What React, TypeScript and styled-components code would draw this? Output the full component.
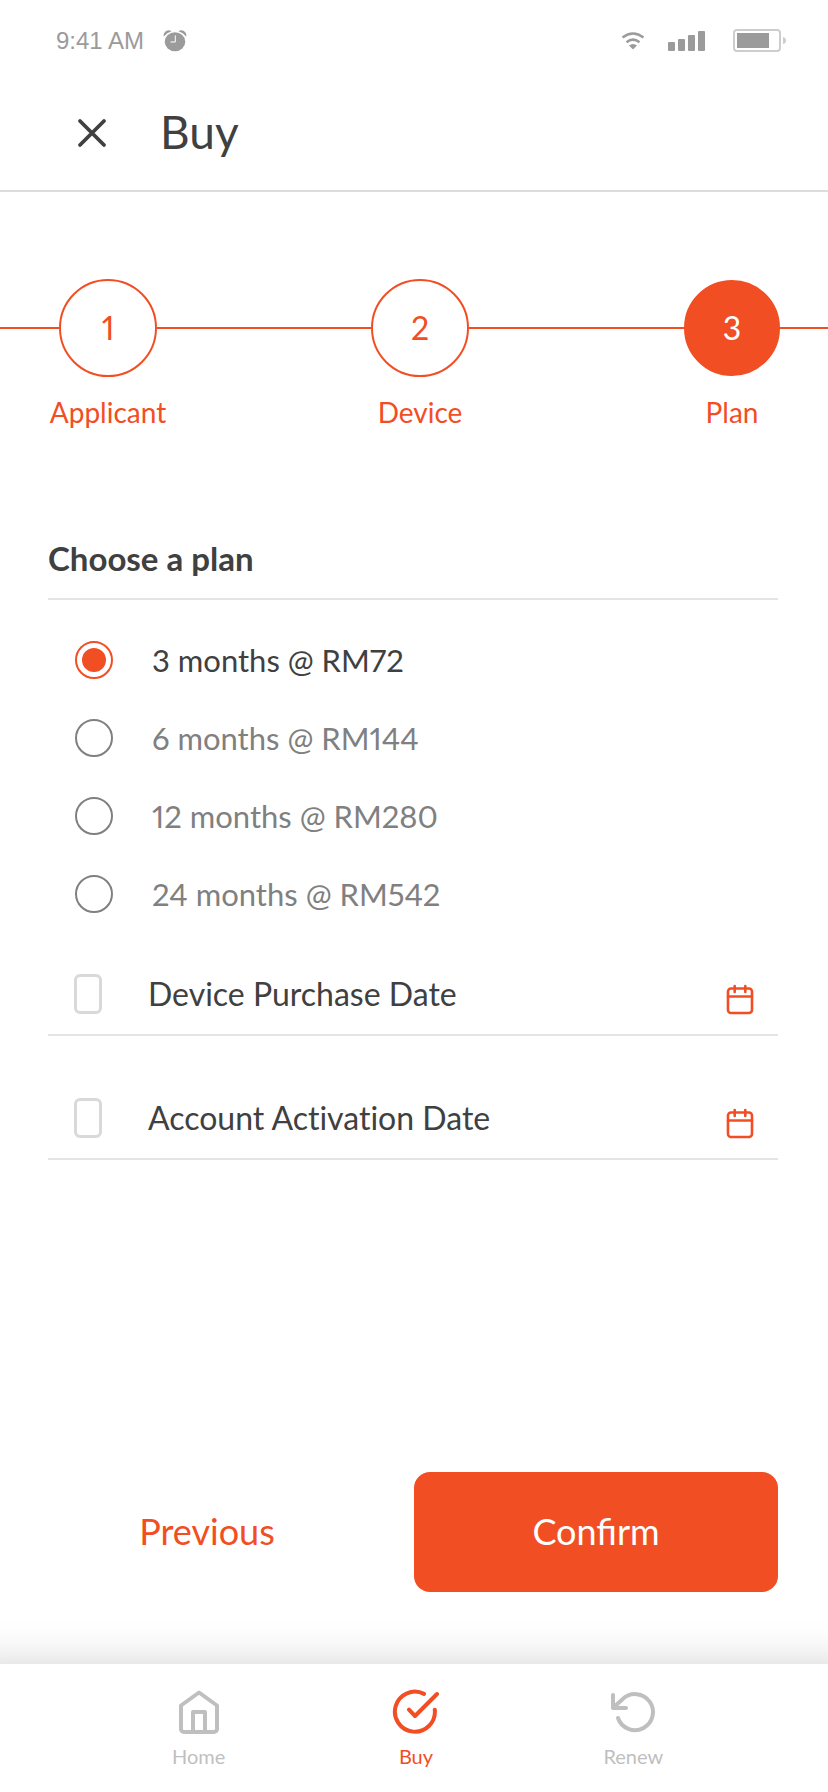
import React, { useState } from "react";
import styled, { createGlobalStyle } from "styled-components";

const accent = "#f24e24";
const ink = "#404040";
const muted = "#808080";
const idle = "#bfbfbf";
const rule = "#e4e4e4";
const statusGray = "#9b9b9b";

const GlobalStyle = createGlobalStyle`
  *, *::before, *::after { box-sizing: border-box; }
  body {
    margin: 0;
    background: #fff;
    color: ${ink};
    font-family: Lato, "Open Sans", sans-serif;
    font-variant-numeric: proportional-nums;
  }
  button, input { font: inherit; color: inherit; }
  button { border: 0; padding: 0; background: none; cursor: pointer; }
`;

const Page = styled.div`
  display: flex;
  flex-direction: column;
  min-height: 100vh;
`;

const StatusBar = styled.div`
  display: flex;
  align-items: center;
  justify-content: space-between;
  height: 82px;
  padding: 0 42px 0 56px;
  color: ${statusGray};
  font: 24px/28px "Liberation Sans", sans-serif;
`;

const StatusGroup = styled.div<{ $gap: number }>`
  display: flex;
  align-items: center;
  gap: ${(p) => p.$gap}px;
`;

const Header = styled.header`
  display: flex;
  align-items: center;
  gap: 51px;
  height: 110px;
  padding: 0 48px 8px 77px;
  border-bottom: 2px solid #dcdcdc;
`;

const CloseButton = styled.button`
  display: flex;
`;

const Title = styled.h1`
  margin: 0;
  font-size: 46px;
  font-weight: 400;
  line-height: 60px;
`;

const Steps = styled.ol`
  display: flex;
  justify-content: space-between;
  margin: 0;
  padding: 87px 36px 0 48px;
  list-style: none;
  background: linear-gradient(${accent}, ${accent}) 0 135px / 100% 2px no-repeat;
`;

const Step = styled.li`
  display: flex;
  flex-direction: column;
  align-items: center;
  gap: 17px;
  width: 120px;
  color: ${accent};
  font-size: 28px;
  line-height: 36px;
`;

const StepNumber = styled.span<{ $active: boolean }>`
  display: flex;
  align-items: center;
  justify-content: center;
  width: ${(p) => (p.$active ? 96 : 98)}px;
  height: ${(p) => (p.$active ? 96 : 98)}px;
  margin: ${(p) => (p.$active ? 1 : 0)}px;
  border: 2px solid ${accent};
  border-radius: 50%;
  background: ${(p) => (p.$active ? accent : "#fff")};
  color: ${(p) => (p.$active ? "#fff" : accent)};
  font-size: 32px;
`;

const Form = styled.form`
  display: flex;
  flex: 1;
  flex-direction: column;
`;

const Fields = styled.div`
  flex: 1;
  padding: 108px 50px 0 48px;
`;

const PlanGroup = styled.fieldset`
  display: block;
  min-width: 0;
  margin: 0;
  padding: 0;
  border: 0;
`;

const Legend = styled.legend`
  width: 100%;
  margin-bottom: 21px;
  padding: 0 0 20px;
  border-bottom: 2px solid ${rule};
  font-size: 33px;
  font-weight: 700;
  line-height: 40px;
`;

const PlanOption = styled.label<{ $active: boolean }>`
  display: flex;
  align-items: center;
  gap: 39px;
  height: 78px;
  padding-left: 27px;
  color: ${(p) => (p.$active ? ink : muted)};
  font-size: 31px;
  line-height: 40px;
`;

const Radio = styled.input`
  appearance: none;
  width: 38px;
  height: 38px;
  margin: 0;
  padding: 5px;
  border: 2px solid ${muted};
  border-radius: 50%;
  background-clip: content-box;

  &:checked {
    border-color: ${accent};
    background-color: ${accent};
  }
`;

const DateRow = styled.div`
  display: flex;
  align-items: center;
  justify-content: space-between;
  height: 82px;
  margin-top: 21px;
  padding: 0 24px 0 26px;
  border-bottom: 2px solid ${rule};

  & + & {
    margin-top: 42px;
  }
`;

const DateLabel = styled.label`
  display: flex;
  align-items: center;
  gap: 46px;
  font-size: 32px;
  font-variant-ligatures: no-common-ligatures;
  line-height: 40px;
`;

const Checkbox = styled.input`
  appearance: none;
  width: 28px;
  height: 40px;
  margin: 0;
  border: 3px solid #d9d9d9;
  border-radius: 6px;

  &:checked {
    border-color: ${accent};
  }
`;

const CalendarButton = styled.button`
  display: flex;
  padding-top: 12px;
  color: ${accent};
`;

const Actions = styled.div`
  display: grid;
  grid-template-columns: 1fr 1fr;
  padding-bottom: 72px;
`;

const ActionButton = styled.button<{ $primary?: boolean }>`
  height: 120px;
  margin-right: ${(p) => (p.$primary ? 50 : 0)}px;
  padding-bottom: 2px;
  border-radius: 16px;
  background: ${(p) => (p.$primary ? accent : "transparent")};
  color: ${(p) => (p.$primary ? "#fff" : accent)};
  font-size: 36px;
  line-height: 44px;
`;

const TabBar = styled.nav`
  display: grid;
  grid-template-columns: repeat(3, 1fr);
  height: 128px;
  padding: 24px 86px 0 90px;
  background: #fff;
  box-shadow: 0 40px 40px 40px rgba(0, 0, 0, 0.18);
`;

const Tab = styled.a<{ $active?: boolean }>`
  display: flex;
  flex-direction: column;
  align-items: center;
  gap: 7px;
  color: ${(p) => (p.$active ? accent : idle)};
  font-size: 20px;
  line-height: 26px;
  text-decoration: none;
`;

const LineIcon = styled.svg`
  display: block;
  fill: none;
  stroke: currentColor;
  stroke-linecap: round;
  stroke-linejoin: round;
`;

const AlarmIcon = () => (
  <svg width="24" height="22" viewBox="0 0 24 22" fill={statusGray} aria-hidden="true">
    <path d="M0.800 6.500A5 5 0 0 1 8.500 1.200Q4 2.500 0.800 6.500ZM23.200 6.500A5 5 0 0 0 15.500 1.200Q20 2.500 23.200 6.500Z" />
    <ellipse cx="12" cy="11.700" rx="10.300" ry="9.500" />
    <path d="M12.300 5.500V12H7.500" fill="none" stroke="#fff" strokeWidth="1" />
  </svg>
);

const WifiIcon = () => (
  <LineIcon width="24" height="20" viewBox="0 0 24 20" strokeWidth="2.500" aria-hidden="true">
    <path d="M1.500 6.500Q12-1.500 22.500 6.500M5.500 11.200Q12 6 18.500 11.200" strokeLinecap="butt" />
    <path d="M8 14.600Q12 11.400 16 14.600L12 18.500Z" fill="currentColor" stroke="none" />
  </LineIcon>
);

const SignalIcon = () => (
  <svg width="41" height="22" viewBox="0 0 41 22" fill={statusGray} aria-hidden="true">
    <rect x="0" y="12" width="7" height="9" rx="1" />
    <rect x="10" y="9" width="7" height="12" rx="1" />
    <rect x="20" y="5" width="7" height="16" rx="1" />
    <rect x="30" y="1" width="7" height="20" rx="1" />
  </svg>
);

const BatteryIcon = () => (
  <svg width="54" height="24" viewBox="0 0 54 24" aria-hidden="true">
    <rect x="2" y="1" width="46" height="21" rx="3" fill="none" stroke="#cdcdcd" strokeWidth="2" />
    <rect x="5" y="4" width="32" height="15" fill={statusGray} />
    <path d="M51 8Q54 8.500 54 11.500T51 15Z" fill="#cdcdcd" />
  </svg>
);

const CloseIcon = () => (
  <LineIcon width="32" height="32" viewBox="0 0 32 32" strokeWidth="3.800" aria-hidden="true">
    <path d="M3 5L27 29M27 5L3 29" />
  </LineIcon>
);

const CalendarIcon = () => (
  <LineIcon width="28" height="32" viewBox="0 0 28 32" strokeWidth="2.600" aria-hidden="true">
    <rect x="2" y="4.500" width="24" height="24.500" rx="3" />
    <path d="M2 12.500H26M8.700 2V8M19.300 2V8" />
  </LineIcon>
);

const HomeIcon = () => (
  <LineIcon width="48" height="48" viewBox="0 0 48 48" strokeWidth="4" aria-hidden="true">
    <path d="M6 17.500L24 4.500L42 17.500V41A3 3 0 0 1 39 44H9A3 3 0 0 1 6 41ZM18 44V24H30V44" />
  </LineIcon>
);

const BuyIcon = () => (
  <LineIcon width="48" height="48" viewBox="0 0 48 48" strokeWidth="4" aria-hidden="true">
    <path d="M42.800 21.700A20 20 0 1 1 32 5.900M17 21.700L23 28L45 6" />
  </LineIcon>
);

const RenewIcon = () => (
  <LineIcon width="48" height="48" viewBox="0 0 48 48" strokeWidth="4" aria-hidden="true">
    <path d="M4 7V20H17M4 20L13.500 11.200A18 18 0 1 1 9 30" />
  </LineIcon>
);

const steps = ["Applicant", "Device", "Plan"];
const plans = ["3 months @ RM72", "6 months @ RM144", "12 months @ RM280", "24 months @ RM542"];
const dates = [
  { id: "purchase", label: "Device Purchase Date" },
  { id: "activation", label: "Account Activation Date" },
];
const tabs = [
  { label: "Home", Icon: HomeIcon },
  { label: "Buy", Icon: BuyIcon },
  { label: "Renew", Icon: RenewIcon },
];

export default function App() {
  const [plan, setPlan] = useState(plans[0]);

  return (
    <Page>
      <GlobalStyle />
      <StatusBar>
        <StatusGroup $gap={19}>
          <span>9:41 AM</span>
          <AlarmIcon />
        </StatusGroup>
        <StatusGroup $gap={23}>
          <WifiIcon />
          <SignalIcon />
          <BatteryIcon />
        </StatusGroup>
      </StatusBar>
      <Header>
        <CloseButton type="button" aria-label="Close">
          <CloseIcon />
        </CloseButton>
        <Title>Buy</Title>
      </Header>
      <Steps>
        {steps.map((name, i) => (
          <Step key={name} aria-current={i === 2 ? "step" : undefined}>
            <StepNumber $active={i === 2}>{i + 1}</StepNumber>
            {name}
          </Step>
        ))}
      </Steps>
      <Form onSubmit={(e) => e.preventDefault()}>
        <Fields>
          <PlanGroup>
            <Legend>Choose a plan</Legend>
            {plans.map((name) => (
              <PlanOption key={name} $active={plan === name}>
                <Radio type="radio" name="plan" checked={plan === name} onChange={() => setPlan(name)} />
                {name}
              </PlanOption>
            ))}
          </PlanGroup>
          {dates.map(({ id, label }) => (
            <DateRow key={id}>
              <DateLabel>
                <Checkbox type="checkbox" name={id} />
                {label}
              </DateLabel>
              <CalendarButton type="button" aria-label={`Pick ${label}`}>
                <CalendarIcon />
              </CalendarButton>
            </DateRow>
          ))}
        </Fields>
        <Actions>
          <ActionButton type="button">Previous</ActionButton>
          <ActionButton type="submit" $primary>
            Confirm
          </ActionButton>
        </Actions>
      </Form>
      <TabBar>
        {tabs.map(({ label, Icon }) => (
          <Tab key={label} href={`#${label.toLowerCase()}`} $active={label === "Buy"}>
            <Icon />
            {label}
          </Tab>
        ))}
      </TabBar>
    </Page>
  );
}
